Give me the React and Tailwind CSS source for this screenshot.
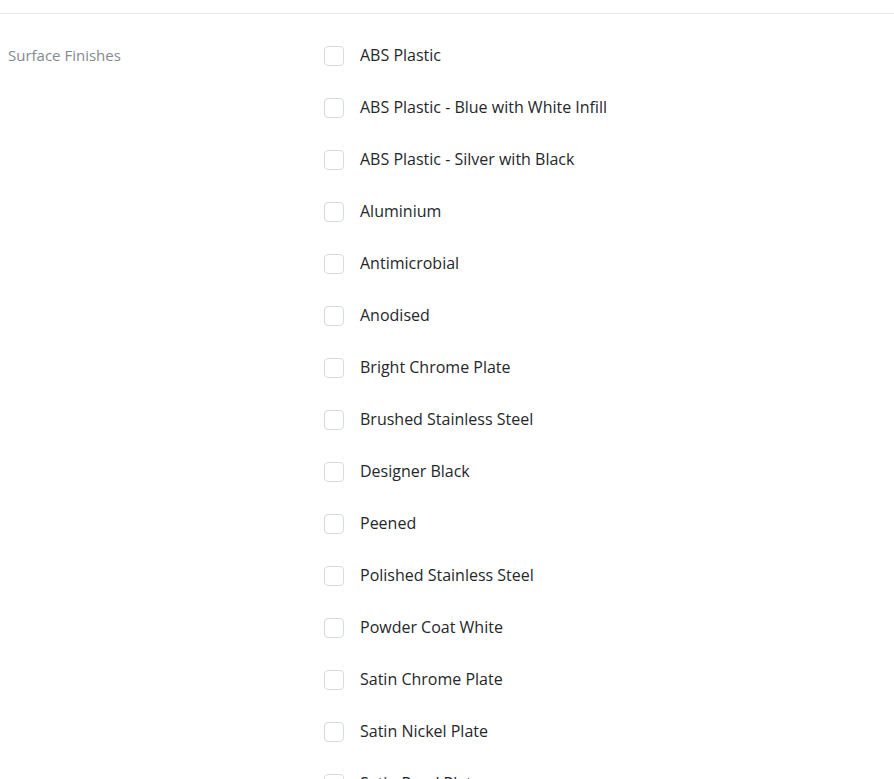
import React from "react";

const finishes = [
  "ABS Plastic",
  "ABS Plastic - Blue with White Infill",
  "ABS Plastic - Silver with Black",
  "Aluminium",
  "Antimicrobial",
  "Anodised",
  "Bright Chrome Plate",
  "Brushed Stainless Steel",
  "Designer Black",
  "Peened",
  "Polished Stainless Steel",
  "Powder Coat White",
  "Satin Chrome Plate",
  "Satin Nickel Plate",
  "Satin Pearl Plate",
  "Satin Stainless Steel",
];

const App = () => {
  return (
    <div className="bg-white min-h-screen" style={{ fontFamily: '"Open Sans", "Noto Sans", sans-serif' }}>
      {/* top divider */}
      <div className="h-[14px] border-b border-[#ebebeb]" />

      <div className="flex pt-[32px]">
        {/* label column */}
        <div className="w-[324px] shrink-0 pl-2">
          <span className="block text-[15px] leading-[18px] text-[#858a90]">Surface Finishes</span>
        </div>

        {/* checkbox list */}
        <div className="flex flex-col gap-8">
          {finishes.map((name) => (
            <label key={name} className="flex items-center gap-4 cursor-pointer">
              <span className="w-5 h-5 rounded-[4px] border border-[#d5dbe1] bg-white shrink-0" />
              <span className="text-[16px] leading-5 text-[#25282b] -mt-[2px]">{name}</span>
            </label>
          ))}
        </div>
      </div>
    </div>
  );
};

export default App;
